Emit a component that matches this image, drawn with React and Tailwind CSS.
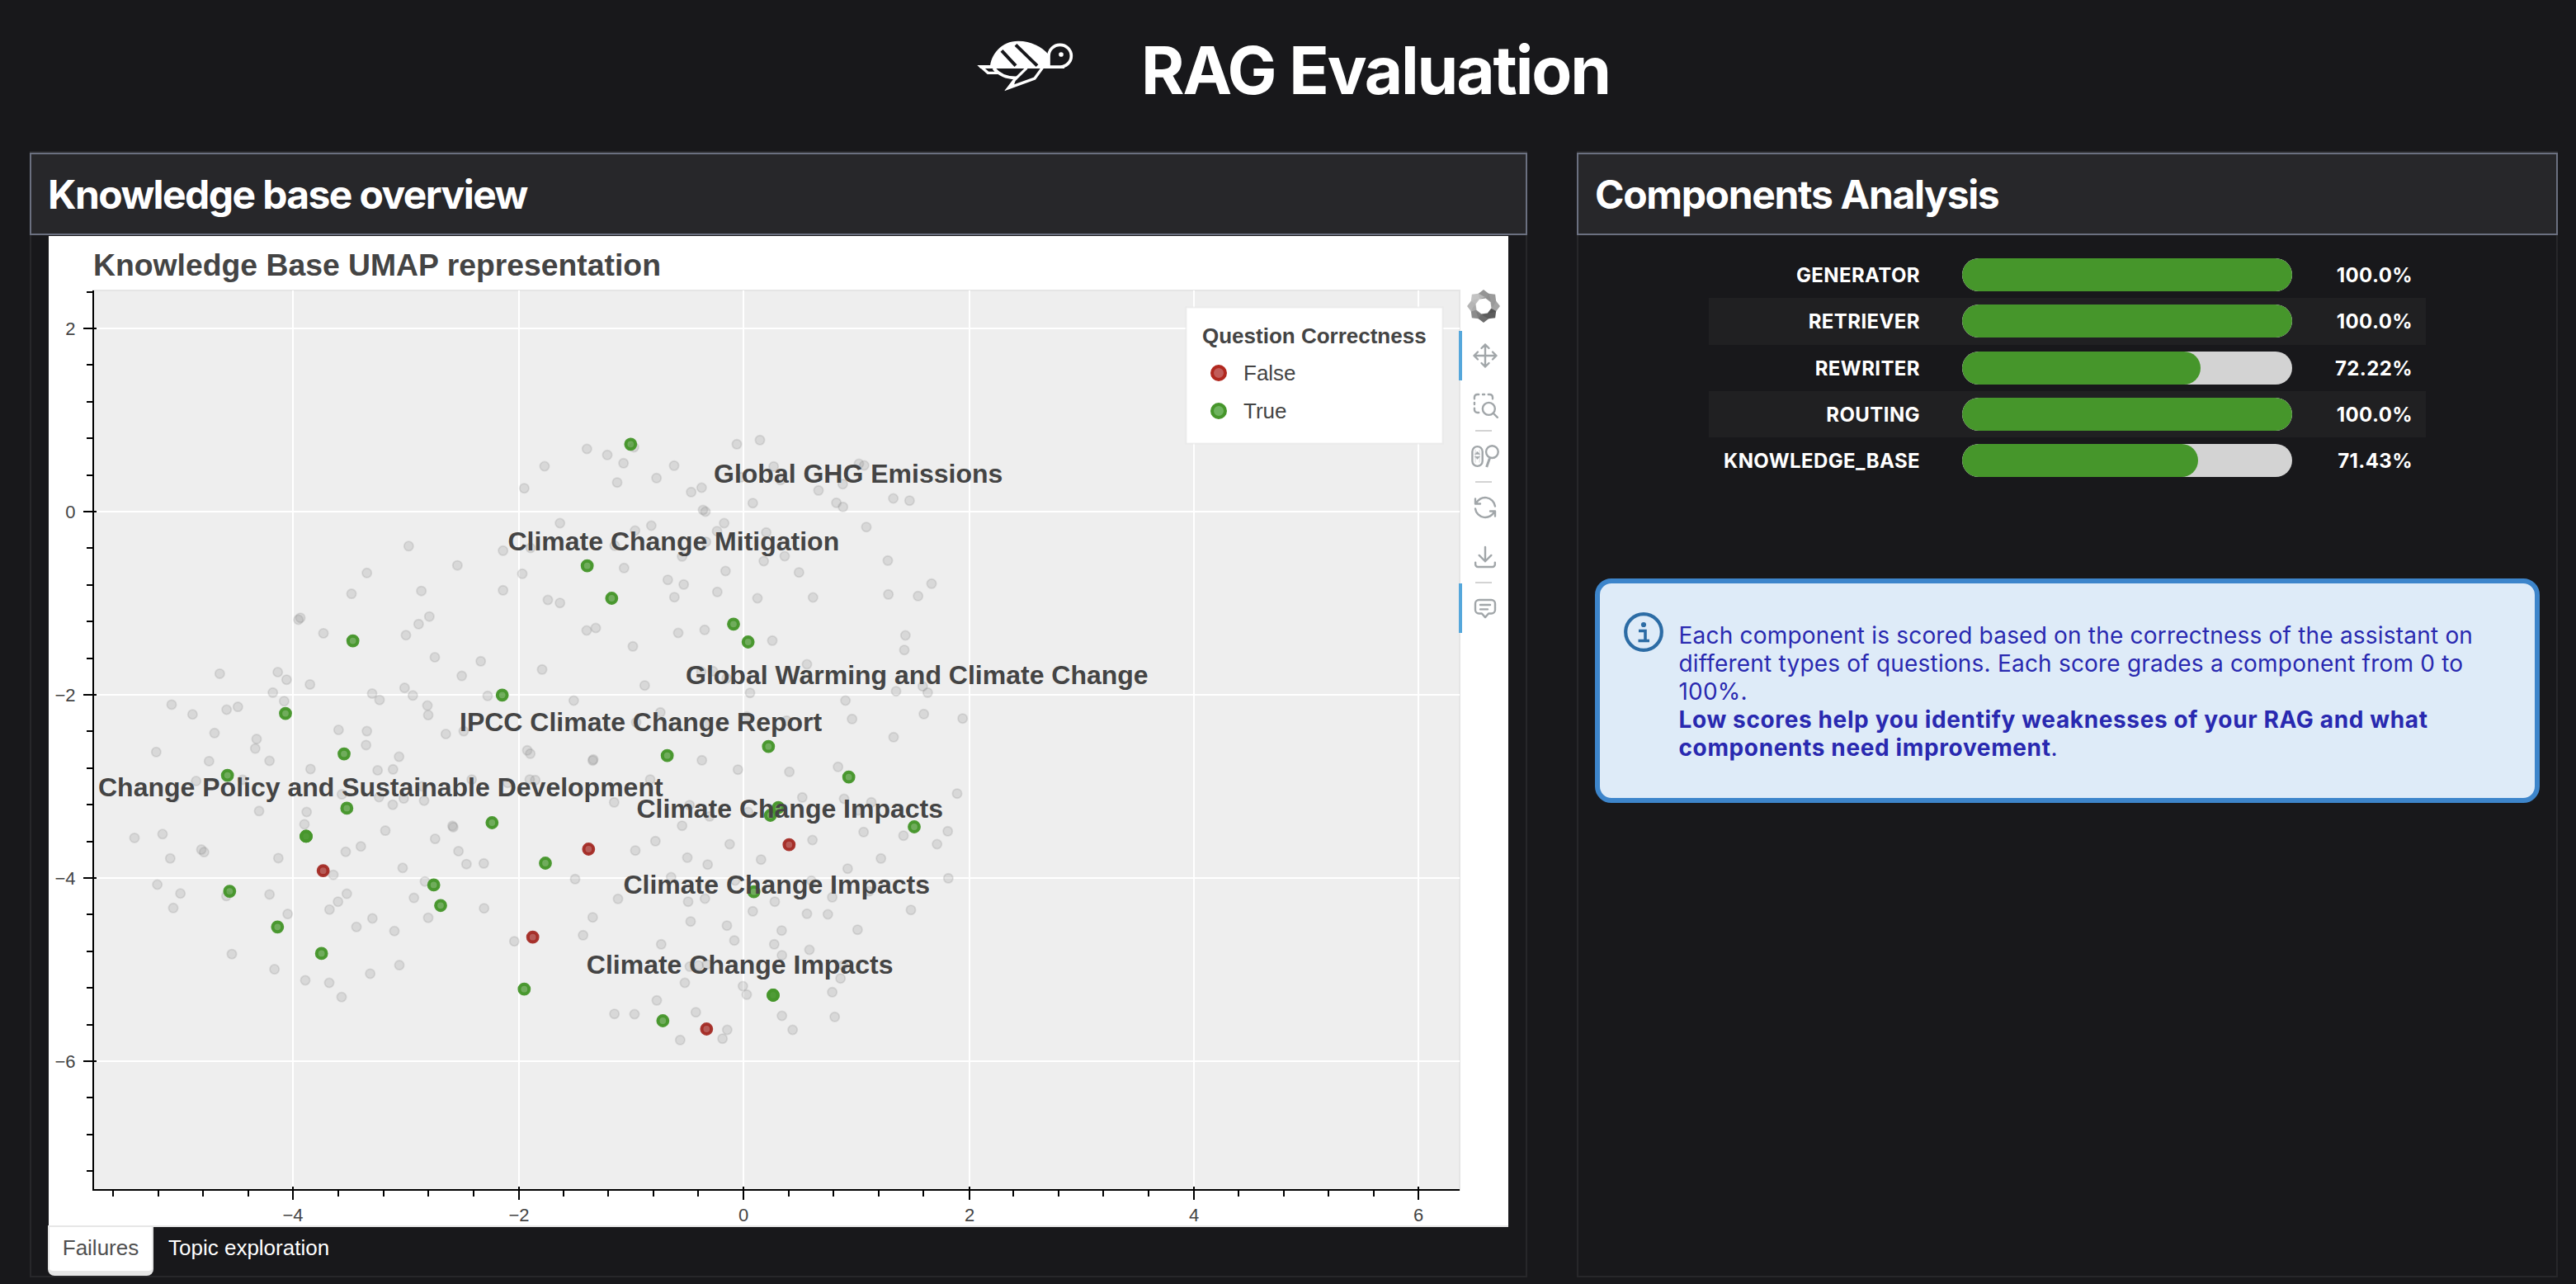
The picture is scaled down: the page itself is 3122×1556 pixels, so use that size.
import React from "react";

/* Scatter points, stored per tile of the canvas: tile origin, units per pixel, flat x/y list. */
const TILES = [
  {
    ox: 100, oy: 640, sx: 3, sy: 2.6133,
    gray: [1186,57,1034,142,1363,118,978,208,1232,199,792,284,785,290,1261,280,1222,304,876,333,1176,339,1281,409,499,461,710,456,742,480,1379,468,827,495,1171,506,1201,530,692,521,1053,524,1080,544,733,548,324,559,400,590,524,575,565,566,1254,562,1257,592,480,649,931,639,1034,643,1321,652,1386,643,633,668,628,698,1031,687,268,709,1151,724,460,738,680,737,829,763,1073,767,1129,764,413,801,582,797,1236,818,943,843,1078,852,1168,856,1128,876,1242,863,333,853,642,896,815,899,807,938,1101,958,1345,943,1348,947,291,969,189,981,1282,984,432,1018,442,1026,957,1025,1012,1008,1367,1023,319,1046,712,1045,1396,1064,1164,1076,912,1098,1245,1119,272,1129,356,1157,330,1203,523,1165,680,1160,746,1222,961,1158,929,1183,898,1208,1205,1171,1257,1234,996,1263,1054,1236,1134,1276,543,1349,698,1397,1152,1384,1046,1411,810,1432,897,1440,942,1485],
    green: [983,357,738,587,951,715,527,783,961,887,813,976,813,976,535,1150,709,1263,869,1347,1277,1130,1302,1195],
    red: [875,1085],
  },
  {
    ox: 560, oy: 500, sx: 3, sy: 3,
    gray: [454,132,528,154,587,184,625,126,771,193,300,195,226,275,564,254,707,238,871,273,833,289,876,354,885,360,999,115,1083,100,1133,196,1015,235,1158,245,1443,186,1462,192,1384,260,1296,283,1057,329,1361,328,1385,343,1470,416,356,402,629,429,688,411,953,402,927,431,1106,436,249,492,149,502,555,484,887,470,800,523,589,565,1097,540,1173,522,958,576,1225,581,219,586,149,646,312,681,356,692,748,608,806,625,772,671,928,652,1074,675,1276,672,453,792,486,783,786,801,882,790,621,850,1128,829,68,904,291,934,1254,915,870,942,912,940,962,966,664,992,1047,1019,93,1030,406,1047,721,1090,633,1126,888,1135,1035,1105,1180,1120,1394,1047,1418,1114],
    green: [613,115,455,557,544,675,987,769,1040,834,146,1027],
    red: [],
  },
  {
    ox: 560, oy: 880, sx: 3, sy: 3,
    gray: [237,88,248,100,475,125,477,121,872,124,1003,158,1190,166,1367,148,35,194,166,206,246,194,266,196,684,194,553,277,827,287,900,328,800,362,703,418,630,452,819,478,893,503,973,429,1087,485,1274,414,1237,259,1389,264,1488,277,1440,306,1040,312,1460,385,1402,518,79,499,411,556,760,549,993,561,1270,562,1346,622,1480,600,80,662,567,628,822,638,883,627,475,695,440,760,190,782,831,710,1057,673,1137,638,1254,682,1330,684,963,725,990,779,724,793,1162,743,1135,793,1163,833,1263,813,1438,740,828,874,860,870,890,866,1385,870,810,933,1376,917,1346,967,1021,945,1035,976,708,997,554,1046,627,1047,850,1040,793,1141,964,1104,947,1136,1163,1053,1202,1104,1355,1057],
    green: [746,107,1114,74,1406,185,109,351,1150,296,1121,324,303,498,1061,602,226,956,1131,978,1131,978,730,1071],
    red: [460,447,1189,431,257,767,889,1101],
  },
  {
    ox: 1040, oy: 860, sx: 3, sy: 3,
    gray: [129,100,380,32,239,16,360,305,326,442,165,458,287,489,83,541,328,613,192,728],
    green: [204,426],
    red: [],
  },
  {
    ox: 1040, oy: 500, sx: 3, sy: 3,
    gray: [128,312,187,320,108,538,267,622,110,661,218,667,172,810,168,863,138,1013,235,995,253,1018],
    green: [],
    red: [],
  },
];

function collect(kind) {
  const out = [];
  for (const t of TILES) {
    const list = t[kind];
    for (let i = 0; i < list.length; i += 2) {
      out.push([t.ox + list[i] / t.sx, t.oy + list[i + 1] / t.sy]);
    }
  }
  return out;
}

const GRAY = collect("gray");
const GREEN = collect("green");
const RED = collect("red");

const X_TICKS = [[355, "−4"], [629, "−2"], [901, "0"], [1175, "2"], [1447, "4"], [1719, "6"]];
const Y_TICKS = [[398, "2"], [620, "0"], [842, "−2"], [1064, "−4"], [1286, "−6"]];
const X_MINOR = [];
for (let i = -28; i <= 30; i++) {
  const x = Math.round(901 + i * 54.55);
  if (i % 5 !== 0 && x > 114 && x < 1768) X_MINOR.push(x);
}
const Y_MINOR = [];
for (let i = -6; i <= 18; i++) {
  if (i % 5 !== 0) Y_MINOR.push(Math.round(620 + i * 44.4));
}

const TOPICS = [
  [865, 584.5, "Global GHG Emissions"],
  [615.4, 666.5, "Climate Change Mitigation"],
  [831, 828.5, "Global Warming and Climate Change"],
  [557, 885.5, "IPCC Climate Change Report"],
  [119, 965, "Change Policy and Sustainable Development"],
  [771.4, 990.5, "Climate Change Impacts"],
  [755.4, 1082.5, "Climate Change Impacts"],
  [710.8, 1179.5, "Climate Change Impacts"],
];

function Chart() {
  return (
    <svg
      viewBox="59 286 1709 1199"
      className="block h-[1199px] w-[1709px] shrink-0 overflow-visible font-['Liberation_Sans',sans-serif]"
    >
      <text x="113" y="334" fontSize="37.35" fontWeight="bold" fill="#444">Knowledge Base UMAP representation</text>
      <rect x="113" y="352" width="1656" height="1090" fill="#eeeeee" stroke="#e5e5e5" strokeWidth="2" />
      <g stroke="#fff" strokeWidth="2">
        {X_TICKS.map(([x]) => <path key={x} d={`M${x} 352V1441`} />)}
        {Y_TICKS.map(([y]) => <path key={y} d={`M114 ${y}H1769`} />)}
      </g>
      <g stroke="#000" strokeWidth="2">
        <path d="M113 352V1442M112 1442H1769" />
        {X_TICKS.map(([x]) => <path key={x} d={`M${x} 1438V1454`} />)}
        {Y_TICKS.map(([y]) => <path key={y} d={`M101 ${y}H117`} />)}
        {X_MINOR.map((x) => <path key={x} d={`M${x} 1442V1450`} />)}
        {Y_MINOR.map((y) => <path key={y} d={`M105 ${y}H113`} />)}
      </g>
      <g fontSize="22" fill="#444">
        {X_TICKS.map(([x, t]) => <text key={x} x={x} y="1480" textAnchor="middle">{t}</text>)}
        {Y_TICKS.map(([y, t]) => <text key={y} x="91.5" y={y + 8} textAnchor="end">{t}</text>)}
      </g>
      <g fill="#808080" fillOpacity="0.2" stroke="#808080" strokeOpacity="0.2" strokeWidth="1.8">
        {GRAY.map(([x, y], i) => <circle key={i} cx={x} cy={y} r="5.6" />)}
      </g>
      <g fill="#46962b" fillOpacity="0.75" stroke="#46962b" strokeOpacity="0.97" strokeWidth="4">
        {GREEN.map(([x, y], i) => <circle key={i} cx={x} cy={y} r="5.9" />)}
      </g>
      <g fill="#a32a24" fillOpacity="0.75" stroke="#a32a24" strokeOpacity="0.95" strokeWidth="4">
        {RED.map(([x, y], i) => <circle key={i} cx={x} cy={y} r="5.9" />)}
      </g>
      <g fontSize="32" fontWeight="bold" fill="#444">
        {TOPICS.map(([x, y, t], i) => <text key={i} x={x} y={y}>{t}</text>)}
      </g>
      <rect x="1437.5" y="372.5" width="311" height="165" fill="#fff" fillOpacity="0.95" stroke="#e5e5e5" strokeOpacity="0.6" strokeWidth="2" />
      <g fontSize="26" fill="#444">
        <text x="1457" y="416" fontWeight="bold">Question Correctness</text>
        <text x="1507" y="460.7">False</text>
        <text x="1507" y="506.7">True</text>
      </g>
      <circle cx="1477" cy="452" r="8" fill="#c15c59" stroke="#b1281f" strokeWidth="4" />
      <circle cx="1477" cy="498" r="8" fill="#6eb35e" stroke="#46962b" strokeWidth="4" />
    </svg>
  );
}

function ToolIcon({ children }) {
  return (
    <svg viewBox="0 0 24 24" className="size-9" fill="none" stroke="#a1a6a9" strokeWidth="1.6" strokeLinecap="round" strokeLinejoin="round">
      {children}
    </svg>
  );
}

function Tool({ active, children }) {
  return (
    <div className={active ? "flex h-[60px] w-full items-center justify-center border-l-4 border-[#55a7db]" : "flex h-[60px] w-full items-center justify-center border-l-4 border-transparent"}>
      {children}
    </div>
  );
}

function Separator() {
  return <div className="ml-5 h-0.5 w-5 bg-[#d3d3d3]" />;
}

const PETALS = ["#8a8a8a", "#8f8f8f", "#999999", "#4a4a4a", "#5c5c5c", "#808080", "#adadad", "#bdbdbd"];

function Toolbar() {
  return (
    <div className="relative flex h-[1199px] w-[60px] flex-col pt-[65px]">
      <svg viewBox="-20 -20 40 40" className="ml-[10px] size-10 shrink-0">
        {PETALS.map((c, i) => (
          <path key={i} d="M-6.5 -15L0 -20L6.5 -15L9 -6.5L3 -9.5L-4.5 -8.5Z" fill={c} fillOpacity="0.9" transform={`rotate(${i * 45})`} />
        ))}
      </svg>
      <div className="mt-[10px] flex flex-col">
        <Tool active>
          <ToolIcon><path d="M12 3v18M3 12h18M9 6l3-3 3 3M9 18l3 3 3-3M6 9l-3 3 3 3M18 9l3 3-3 3" /></ToolIcon>
        </Tool>
        <Tool>
          <ToolIcon>
            <path d="M3.3 6.8V5.6a2.3 2.3 0 0 1 2.3-2.3h1.2M10 3.3h1.4M14.5 3.3h1.2a2.3 2.3 0 0 1 2.3 2.3v1.2M3.3 9.9v1.4M3.3 14.4v1.3a2.3 2.3 0 0 0 2.3 2.3h1.2" />
            <circle cx="14.9" cy="14.9" r="5" />
            <path d="M18.5 18.5l3.4 3.4" />
          </ToolIcon>
        </Tool>
        <Separator />
        <Tool>
          <ToolIcon>
            <rect x="1.6" y="4.1" width="8.2" height="15.8" rx="4.1" />
            <path d="M3.7 10.3h4L5.7 8.2zM3.7 12.2h4L5.7 14.3z" fill="#a1a6a9" strokeWidth="0.3" />
            <path d="M4 6.8v10M7.4 6.8v10" strokeWidth="0.3" />
            <circle cx="17.6" cy="8.4" r="4.9" />
            <path d="M15.6 13.6l-2.5 7" strokeWidth="2" strokeLinecap="butt" />
          </ToolIcon>
        </Tool>
        <Separator />
        <Tool>
          <ToolIcon><path d="M20 11a8.1 8.1 0 0 0-15.5-2M4 5v4h4M4 13a8.1 8.1 0 0 0 15.5 2M20 19v-4h-4" /></ToolIcon>
        </Tool>
        <Tool>
          <ToolIcon><path d="M12 3.9v11.6M7.1 10.6l4.9 4.9 4.9-4.9M4.1 16.4v1.6a2 2 0 0 0 2 2h11.8a2 2 0 0 0 2-2v-1.6" /></ToolIcon>
        </Tool>
        <Separator />
        <Tool active>
          <ToolIcon>
            <path d="M7 5.3h10a3 3 0 0 1 3 3v5a3 3 0 0 1-3 3h-2.3L12 19.4l-2.7-3.1H7a3 3 0 0 1-3-3v-5a3 3 0 0 1 3-3zM8 9.3h8M8 12.9h6" />
          </ToolIcon>
        </Tool>
      </div>
    </div>
  );
}

function TurtleLogo() {
  return (
    <svg viewBox="0 0 420 240" className="h-20 w-[140px]" fill="none">
      <path d="M74 128C76 78 116 29 177 29C225 29 262 50 288 78V128Z" fill="#fff" />
      <path d="M28 117H345V129H40Z" fill="#fff" />
      <path d="M117 64L168 119M168 43L246 119" stroke="#18181b" strokeWidth="12" />
      <path d="M288 123V83A41 40 0 1 1 329 123Z" fill="#18181b" stroke="#fff" strokeWidth="11" />
      <circle cx="333" cy="78" r="8.5" fill="#fff" />
      <path d="M40 121L67 145H104L88 129" stroke="#fff" strokeWidth="10" />
      <path d="M88 128Q118 165 172 163" stroke="#fff" strokeWidth="11" />
      <path d="M208 127L162 172L141 200L237 165L265 127" stroke="#fff" strokeWidth="10" />
      <path d="M172 158L128 209L160 194Z" fill="#fff" />
    </svg>
  );
}

const SCORES = [
  ["GENERATOR", 100, "100.0%"],
  ["RETRIEVER", 100, "100.0%"],
  ["REWRITER", 72.22, "72.22%"],
  ["ROUTING", 100, "100.0%"],
  ["KNOWLEDGE_BASE", 71.43, "71.43%"],
];

function ScoreTable() {
  return (
    <div className="mx-auto mt-[20px] w-[869px] text-[24px] leading-none font-bold tracking-[0.4px]">
      {SCORES.map(([name, value, label]) => (
        <div key={name} className="flex h-[56.3px] items-center pr-[16px] even:bg-[#202022]">
          <div className="w-[256px] pt-0.5 text-right">{name}</div>
          <div className="ml-[51px] h-10 w-[400px] overflow-hidden rounded-full bg-[#d3d3d3]">
            <div className="h-full rounded-full bg-[#46962b]" style={{ width: `${value}%` }} />
          </div>
          <div className="flex-1 pt-0.5 text-right">{label}</div>
        </div>
      ))}
    </div>
  );
}

function CardHeader({ children, className }) {
  return (
    <h2 className={"-mx-0.5 flex h-[100px] items-center border-2 border-[#6b7080] bg-[#27272a] pt-0.5 pl-5 text-[48px] leading-none font-bold whitespace-nowrap " + className}>
      {children}
    </h2>
  );
}

export default function App() {
  return (
    <div className="h-[1556px] w-[3122px] overflow-hidden bg-[#18181b] font-['Inter',sans-serif] text-white">
      <header className="flex h-[183px] pl-[1175px]">
        <div className="mt-10"><TurtleLogo /></div>
        <h1 className="mt-[45px] ml-[68px] text-[80px] leading-[80px] font-bold tracking-[-2.15px] whitespace-nowrap">RAG Evaluation</h1>
      </header>

      <main className="flex gap-[60px] pl-9">
        <section className="h-[1365px] w-[1815px] border-2 border-[#27272a]">
          <CardHeader className="tracking-[-1.6px]">Knowledge base overview</CardHeader>
          <div className="mt-px ml-[21px] flex h-[1199px] w-[1769px] bg-white">
            <Chart />
            <Toolbar />
          </div>
          <div className="ml-5 flex h-[61px] w-[1770px] border-t-2 border-[#e6e6e6] font-['Liberation_Sans',sans-serif] text-[26px] leading-none">
            <div className="flex h-[59px] w-[128px] justify-center rounded-b-lg border-x-2 border-b-[6px] border-[#e6e6e6] bg-white pt-3 text-[#4f4f4f]">Failures</div>
            <div className="pt-3 pl-[18px]">Topic exploration</div>
          </div>
        </section>

        <section className="h-[1365px] w-[1189px] border-2 border-[#27272a]">
          <CardHeader className="tracking-[-1.35px]">Components Analysis</CardHeader>
          <ScoreTable />
          <div className="mt-[115px] ml-5 flex h-[272px] w-[1145px] rounded-[20px] border-[6px] border-[#3d85cb] bg-[#deebf8] text-[#2929b0]">
            <svg viewBox="0 0 48 48" className="mt-[35px] ml-[29px] size-12 shrink-0" fill="none">
              <circle cx="24" cy="24" r="21.8" stroke="#2c6ca5" strokeWidth="4.2" />
              <circle cx="24" cy="15" r="3.1" fill="#2c6ca5" />
              <path d="M18 22.5H26V34M17.5 34.5H31" stroke="#2c6ca5" strokeWidth="3.6" />
            </svg>
            <p className="mt-[46px] ml-[18.5px] text-[28px] leading-[34px] tracking-[0.2px] whitespace-nowrap">
              Each component is scored based on the correctness of the assistant on<br />
              different types of questions. Each score grades a component from 0 to<br />
              100%.<br />
              <b className="tracking-[0.63px]">Low scores help you identify weaknesses of your RAG and what<br />
              components need improvement</b>.
            </p>
          </div>
        </section>
      </main>
    </div>
  );
}
